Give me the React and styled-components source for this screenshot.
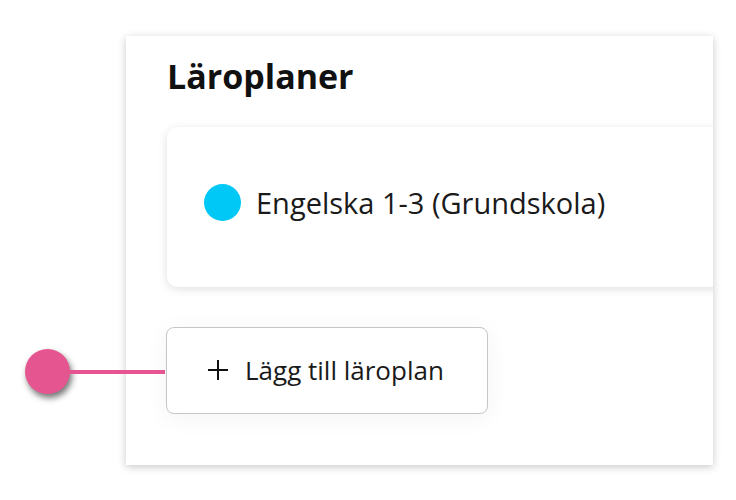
import React from 'react'
import styled, { createGlobalStyle } from 'styled-components'

const GlobalStyle = createGlobalStyle`
  body {
    margin: 0;
    background: #fff;
    font-family: "Open Sans", "Noto Sans", sans-serif;
    color: #111;
  }
`

const Page = styled.div`
  position: relative;
  width: 736px;
  height: 500px;
  padding: 36px 0 0 126px;
  box-sizing: border-box;
  overflow: hidden;
`

const Panel = styled.section`
  width: 587px;
  height: 429px;
  background: #fff;
  box-shadow: 0 2px 8px rgba(0, 0, 0, 0.22);
  overflow: hidden;
  padding: 17px 0 0 41px;
  box-sizing: border-box;
`

const Title = styled.h2`
  margin: 0;
  font-size: 34px;
  font-weight: 700;
  line-height: 46px;
  color: #111;
`

const Card = styled.div`
  width: 620px;
  height: 160px;
  margin-top: 28px;
  background: #fff;
  border-radius: 10px;
  box-shadow: 0 2px 10px rgba(0, 0, 0, 0.13);
  display: flex;
  align-items: center;
  padding: 0 0 10px 37px;
  box-sizing: border-box;
  gap: 15px;
`

const Dot = styled.span`
  width: 37px;
  height: 37px;
  border-radius: 50%;
  background: ${({ color }) => color};
  flex-shrink: 0;
`

const CardText = styled.span`
  font-size: 29px;
  color: #1a1a1a;
`

const AddButton = styled.button`
  margin-top: 40px;
  margin-left: -1px;
  width: 322px;
  height: 87px;
  background: #fff;
  border: 1.5px solid #c6c6c6;
  border-radius: 8px;
  box-shadow: 0 4px 24px rgba(0, 0, 0, 0.05);
  display: flex;
  align-items: center;
  gap: 16px;
  padding: 0 0 2px 40px;
  font-family: inherit;
  font-size: 26px;
  color: #1a1a1a;
  cursor: pointer;
`

const Marker = styled.div`
  position: absolute;
  left: 25px;
  top: 349px;
  display: flex;
  align-items: center;
`

const MarkerDot = styled.span`
  width: 45px;
  height: 45px;
  border-radius: 50%;
  background: #e5558f;
  box-shadow: 2px 4px 6px rgba(0, 0, 0, 0.55);
  flex-shrink: 0;
`

const MarkerLine = styled.span`
  width: 97px;
  height: 4px;
  margin-left: -2px;
  background: #e5558f;
`

function PlusIcon() {
  return (
    <svg width="22" height="22" viewBox="0 0 22 22">
      <path d="M11 1v20M1 11h20" stroke="#111" strokeWidth="2" fill="none" />
    </svg>
  )
}

export default function App() {
  return (
    <>
      <GlobalStyle />
      <Page>
        <Panel>
          <Title>Läroplaner</Title>
          <Card>
            <Dot color="#00c8f6" />
            <CardText>Engelska 1-3 (Grundskola)</CardText>
          </Card>
          <AddButton>
            <PlusIcon />
            Lägg till läroplan
          </AddButton>
        </Panel>
        <Marker>
          <MarkerDot />
          <MarkerLine />
        </Marker>
      </Page>
    </>
  )
}
